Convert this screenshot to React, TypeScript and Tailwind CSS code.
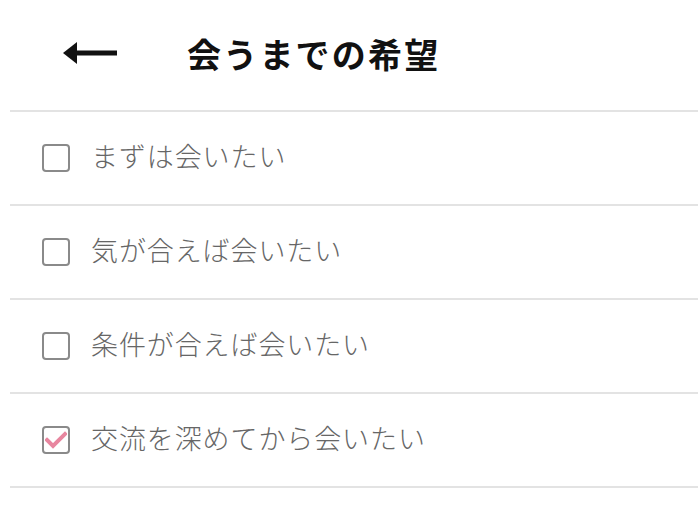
const options = [
  { label: 'まずは会いたい', checked: false },
  { label: '気が合えば会いたい', checked: false },
  { label: '条件が合えば会いたい', checked: false },
  { label: '交流を深めてから会いたい', checked: true },
];

function Checkbox({ checked }: { checked: boolean }) {
  return (
    <div className="w-[28px] h-[28px] border-2 border-[#8a8a8a] rounded-[4px] flex items-center justify-center shrink-0">
      {checked && (
        <svg width="22" height="18" viewBox="0 0 22 18">
          <path d="M2 9 L8 15 L20 3" fill="none" stroke="#e8869f" strokeWidth="4" strokeLinecap="square" />
        </svg>
      )}
    </div>
  );
}

export default function App() {
  return (
    <div
      className="w-[698px] h-[522px] bg-white pl-[10px]"
      style={{ fontFamily: '"Noto Sans CJK JP", "Noto Sans", sans-serif' }}
    >
      <header className="h-[112px] flex items-center pb-[4px] border-b-2 border-[#e3e3e3]">
        <svg width="56" height="22" viewBox="0 0 56 22" className="ml-[53px]">
          <rect x="12" y="8.5" width="42" height="5" fill="#111" />
          <path d="M0 11 L14 0 L14 22 Z" fill="#111" />
        </svg>
        <h1 className="ml-[68px] text-[34px] font-bold tracking-[2.2px] text-[#111]">会うまでの希望</h1>
      </header>
      {options.map((opt) => (
        <div key={opt.label} className="h-[94px] flex items-center border-b-2 border-[#e3e3e3] pl-[32px]">
          <Checkbox checked={opt.checked} />
          <span className="ml-[21px] mb-[3px] text-[27px] font-light tracking-[0.9px] text-[#666]">{opt.label}</span>
        </div>
      ))}
    </div>
  );
}
